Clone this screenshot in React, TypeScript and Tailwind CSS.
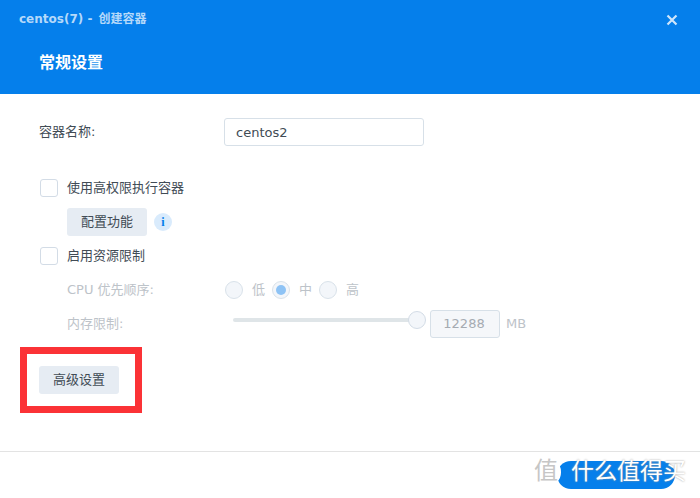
const font = { fontFamily: '"DejaVu Sans", "Noto Sans CJK SC", sans-serif' };

function Checkbox() {
  return <span className="block h-[18px] w-[18px] shrink-0 rounded-[3px] border border-[#d3dce6] bg-white" />;
}

function Radio({ checked = false }: { checked?: boolean }) {
  return (
    <span className="flex h-[18px] w-[18px] shrink-0 items-center justify-center rounded-full border border-[#d9e2ea] bg-[#f3f6fa]">
      {checked && <span className="block h-[10px] w-[10px] rounded-full bg-[#8ec3f5]" />}
    </span>
  );
}

function SoftButton({ children }: { children: string }) {
  return (
    <button className="flex h-7 w-20 items-center justify-center rounded-[3px] bg-[#e6ecf3] text-[13px] text-[#414b55]">
      {children}
    </button>
  );
}

export default function App() {
  return (
    <div className="relative h-[498px] w-[700px] overflow-hidden bg-white" style={font}>
      <header className="h-[94px] bg-[#057feb]">
        <div className="flex h-[37px] items-center justify-between pl-[19px] pr-[22px]">
          <span className="text-[12px] font-bold text-[#b5d9fa]">
            centos(7) - <span className="ml-0.5">创建容器</span>
          </span>
          <svg width="12" height="12" viewBox="0 0 12 12" className="mt-0.5">
            <path d="M1.5 1.5l9 9M10.5 1.5l-9 9" stroke="#cfe6fb" strokeWidth="2.2" />
          </svg>
        </div>
        <h1 className="pl-[39px] pt-[14px] text-[16px] leading-6 font-bold text-white">常规设置</h1>
      </header>

      <main className="h-[358px] border-b border-[#e3e3e3] pl-[39px] pt-6 text-[13px] text-[#414b55]">
        <div className="flex h-7 items-center">
          <label className="w-[185px]">容器名称:</label>
          <input
            readOnly
            value="centos2"
            className="h-7 w-[200px] rounded-[3px] border border-[#d7e0e8] px-[11px] text-[13px] text-[#414b55] outline-none"
          />
        </div>

        <div className="mt-[33px] flex h-[18px] items-center gap-[9px] pl-px">
          <Checkbox />
          <span>使用高权限执行容器</span>
        </div>

        <div className="mt-[11px] flex items-center gap-[7px] pl-7">
          <SoftButton>配置功能</SoftButton>
          <span className="flex h-[18px] w-[18px] items-center justify-center rounded-full bg-[#d9ebfc] font-['Liberation_Serif',serif] text-[12px] leading-none font-bold text-[#057feb]">
            i
          </span>
        </div>

        <div className="mt-[11px] flex h-[18px] items-center gap-[9px] pl-px">
          <Checkbox />
          <span>启用资源限制</span>
        </div>

        <div className="mt-4 flex h-[18px] items-center pl-7 text-[#bdc3c9]">
          <span className="w-[158px]">CPU 优先顺序:</span>
          <div className="flex items-center">
            <Radio />
            <span className="ml-[9px] w-5">低</span>
            <Radio checked />
            <span className="ml-[9px] w-5">中</span>
            <Radio />
            <span className="ml-[9px]">高</span>
          </div>
        </div>

        <div className="mt-[11px] flex h-7 items-center pl-7 text-[#bdc3c9]">
          <span className="w-[166px]">内存限制:</span>
          <div className="relative mb-2 h-1 w-[184px] rounded-full bg-[#dfe5e8]">
            <span className="absolute -right-[9px] -top-[7px] h-[18px] w-[18px] rounded-full border border-[#d3dce6] bg-[#f3f6fa]" />
          </div>
          <span className="ml-[13px] flex h-7 w-[70px] items-center justify-center rounded-[3px] border border-[#d7e0e8] bg-[#f5f7fa] pr-0.5 text-[#a5abb2]">
            12288
          </span>
          <span className="ml-1.5">MB</span>
        </div>

        <div className="mt-7">
          <SoftButton>高级设置</SoftButton>
        </div>
      </main>

      {/* annotation drawn on top of the screenshot */}
      <div className="absolute left-5 top-[347px] h-[66px] w-[122px] border-[7px] border-[#fb3236]" />

      {/* watermark */}
      <div className="absolute left-[557px] top-[461px] h-[28px] w-[118px] rounded-full bg-[#057feb]" />
      <div className="absolute left-[534px] top-[458px] h-[28px] w-[27px] rounded-full bg-white" />
      <div className="absolute left-[534px] top-[455px] flex items-center text-[24px] leading-8 whitespace-nowrap">
        <span className="text-[#c6c6c6]">值</span>
        <span className="ml-[13px] text-[23px] text-white [text-shadow:0_0_2px_#9a9a9a]">什么值得买</span>
      </div>
    </div>
  );
}
